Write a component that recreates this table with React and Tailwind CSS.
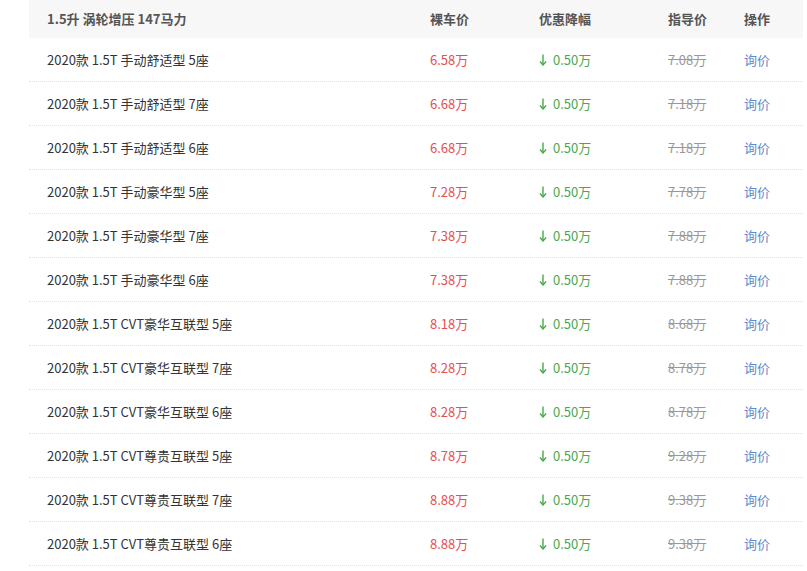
const rows = [
  ["2020款 1.5T 手动舒适型 5座", "6.58万", "7.08万"],
  ["2020款 1.5T 手动舒适型 7座", "6.68万", "7.18万"],
  ["2020款 1.5T 手动舒适型 6座", "6.68万", "7.18万"],
  ["2020款 1.5T 手动豪华型 5座", "7.28万", "7.78万"],
  ["2020款 1.5T 手动豪华型 7座", "7.38万", "7.88万"],
  ["2020款 1.5T 手动豪华型 6座", "7.38万", "7.88万"],
  ["2020款 1.5T CVT豪华互联型 5座", "8.18万", "8.68万"],
  ["2020款 1.5T CVT豪华互联型 7座", "8.28万", "8.78万"],
  ["2020款 1.5T CVT豪华互联型 6座", "8.28万", "8.78万"],
  ["2020款 1.5T CVT尊贵互联型 5座", "8.78万", "9.28万"],
  ["2020款 1.5T CVT尊贵互联型 7座", "8.88万", "9.38万"],
  ["2020款 1.5T CVT尊贵互联型 6座", "8.88万", "9.38万"],
];

const cols = "grid grid-cols-[401px_109px_129px_76px_59px] items-center";

export default function App() {
  return (
    <div className="min-h-screen bg-white pl-[29px] text-[13px] text-[#333]" style={{ fontFamily: '"Noto Sans CJK SC", "Liberation Sans", sans-serif' }}>
      <div className="w-[774px]">
        {/* header */}
        <div className={`${cols} h-[38px] bg-[#f7f7f7] font-bold text-[#555]`}>
          <div className="pl-[18px]">1.5升 涡轮增压 147马力</div>
          <div>裸车价</div>
          <div>优惠降幅</div>
          <div>指导价</div>
          <div>操作</div>
        </div>

        {rows.map(([name, price, guide], i) => (
          <div key={i} className={`${cols} h-[44px] border-b border-dotted border-[#e3e3e3]`}>
            <div className="pl-[18px]">{name}</div>
            <div className="text-[#e2514c]">{price}</div>
            <div className="flex items-center gap-[6px] text-[#4aa84e]">
              <svg width="8" height="12" viewBox="0 0 8 12" fill="none">
                <path d="M4 0.5V10.5" stroke="currentColor" strokeWidth="1.4" />
                <path d="M1 7.5L4 11L7 7.5" stroke="currentColor" strokeWidth="1.4" />
              </svg>
              <span>0.50万</span>
            </div>
            <div className="text-[#999] line-through">{guide}</div>
            <div className="text-[#5b8ad0]">询价</div>
          </div>
        ))}
      </div>
    </div>
  );
}
